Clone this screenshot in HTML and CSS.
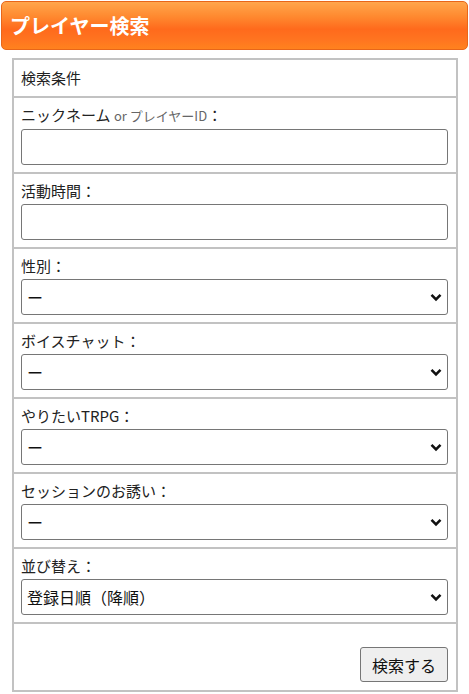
FILE: index.html
```html
<!DOCTYPE html>
<html lang="ja">
<head>
<meta charset="utf-8">
<title>プレイヤー検索</title>
<link rel="stylesheet" href="styles.css">
</head>
<body>
<h1 class="header">プレイヤー検索</h1>
<form class="panel">
  <div class="row row-title">検索条件</div>
  <div class="row">
    <label class="label">ニックネーム <span class="sub">or プレイヤーID</span>：</label>
    <input class="field" type="text">
  </div>
  <div class="row">
    <label class="label">活動時間：</label>
    <input class="field" type="text">
  </div>
  <div class="row">
    <label class="label">性別：</label>
    <div class="select-wrap">
      <select class="field select"><option>ー</option></select>
      <svg class="chev" width="12" height="9" viewBox="0 0 12 9"><path d="M1.5 1.8 L6 6.3 L10.5 1.8" fill="none" stroke="#111" stroke-width="2.6"/></svg>
    </div>
  </div>
  <div class="row">
    <label class="label">ボイスチャット：</label>
    <div class="select-wrap">
      <select class="field select"><option>ー</option></select>
      <svg class="chev" width="12" height="9" viewBox="0 0 12 9"><path d="M1.5 1.8 L6 6.3 L10.5 1.8" fill="none" stroke="#111" stroke-width="2.6"/></svg>
    </div>
  </div>
  <div class="row">
    <label class="label">やりたいTRPG：</label>
    <div class="select-wrap">
      <select class="field select"><option>ー</option></select>
      <svg class="chev" width="12" height="9" viewBox="0 0 12 9"><path d="M1.5 1.8 L6 6.3 L10.5 1.8" fill="none" stroke="#111" stroke-width="2.6"/></svg>
    </div>
  </div>
  <div class="row">
    <label class="label">セッションのお誘い：</label>
    <div class="select-wrap">
      <select class="field select"><option>ー</option></select>
      <svg class="chev" width="12" height="9" viewBox="0 0 12 9"><path d="M1.5 1.8 L6 6.3 L10.5 1.8" fill="none" stroke="#111" stroke-width="2.6"/></svg>
    </div>
  </div>
  <div class="row">
    <label class="label">並び替え：</label>
    <div class="select-wrap">
      <select class="field select"><option>登録日順（降順）</option></select>
      <svg class="chev" width="12" height="9" viewBox="0 0 12 9"><path d="M1.5 1.8 L6 6.3 L10.5 1.8" fill="none" stroke="#111" stroke-width="2.6"/></svg>
    </div>
  </div>
  <div class="row row-actions">
    <button class="button" type="button">検索する</button>
  </div>
</form>
</body>
</html>
```

FILE: styles.css
```css
html, body {
  background: #ffffff;
}
body {
  margin: 0;
  padding: 1px 0 0 1px;
  font-family: "Noto Sans CJK JP", "Noto Sans", sans-serif;
  color: #222222;
}
.header {
  margin: 0;
  width: 465px;
  height: 47px;
  box-sizing: content-box;
  border: 1px solid #e8661a;
  border-radius: 5px;
  background: linear-gradient(to bottom, #ffa64c 0%, #ff8a30 30%, #ff6a1c 58%, #ff7420 80%, #ff821e 100%);
  color: #ffffff;
  font-size: 20px;
  font-weight: bold;
  line-height: 47px;
  padding: 0;
  text-indent: 8px;
}
.panel {
  margin: 8px 0 0 11px;
  width: 442px;
  border: 2px solid #c2c2c2;
  display: flex;
  flex-direction: column;
}
.row {
  padding: 7px 8px 7px 7px;
  display: flex;
  flex-direction: column;
}
.row + .row {
  border-top: 2px solid #c2c2c2;
}
.row-title {
  font-size: 15px;
  line-height: 22px;
}
.label {
  font-size: 15px;
  line-height: 20px;
  margin-bottom: 3px;
  color: #222222;
}
.sub {
  font-size: 13px;
  color: #666666;
}
.field {
  box-sizing: border-box;
  width: 100%;
  height: 36px;
  margin: 0;
  border: 1px solid #767676;
  border-radius: 3px;
  background: #ffffff;
  font-family: "Noto Sans CJK JP", "Noto Sans", sans-serif;
  font-size: 16px;
  color: #111111;
  padding: 0 5px;
}
.select-wrap {
  position: relative;
}
.select {
  -webkit-appearance: none;
  appearance: none;
  padding-left: 5px;
  padding-right: 24px;
}
.chev {
  position: absolute;
  right: 6px;
  top: 14px;
  pointer-events: none;
}
.row-actions {
  padding: 23px 8px 8px 7px;
  align-items: flex-end;
}
.button {
  box-sizing: border-box;
  width: 88px;
  height: 35px;
  border: 1px solid #767676;
  border-radius: 3px;
  background: #efefef;
  font-family: "Noto Sans CJK JP", "Noto Sans", sans-serif;
  font-size: 16px;
  color: #111111;
  padding: 0;
}
```
